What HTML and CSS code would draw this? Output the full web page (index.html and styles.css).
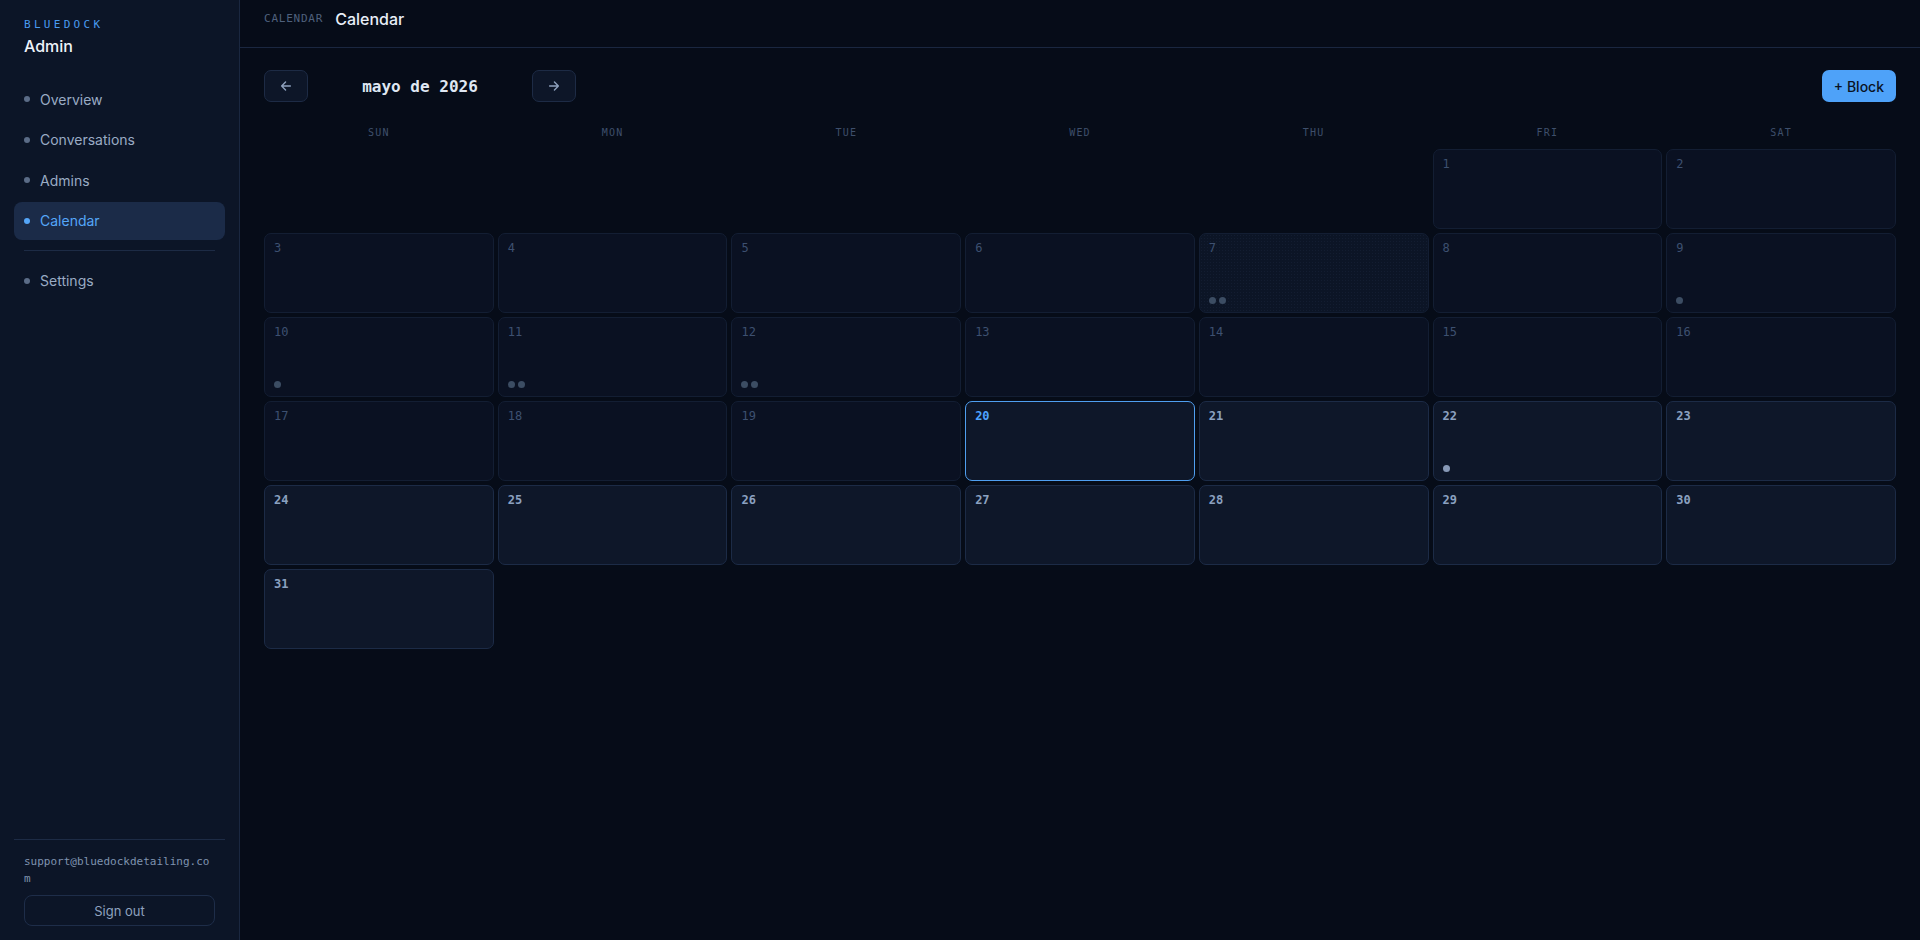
FILE: index.html
```html
<!DOCTYPE html>
<html lang="es">
<head>
<meta charset="utf-8">
<title>Bluedock Admin · Calendar</title>
<link rel="stylesheet" href="styles.css">
</head>
<body>
<div class="app">
  <aside class="sidebar">
    <div class="brand">
      <div class="brand-mark">BLUEDOCK</div>
      <div class="brand-title">Admin</div>
    </div>
    <nav class="nav">
      <a class="nav-item"><span class="nav-dot"></span>Overview</a>
      <a class="nav-item"><span class="nav-dot"></span>Conversations</a>
      <a class="nav-item"><span class="nav-dot"></span>Admins</a>
      <a class="nav-item is-active"><span class="nav-dot"></span>Calendar</a>
      <div class="nav-divider"></div>
      <a class="nav-item"><span class="nav-dot"></span>Settings</a>
    </nav>
    <div class="sidebar-footer">
      <div class="account-email">support@bluedockdetailing.com</div>
      <button class="signout">Sign out</button>
    </div>
  </aside>

  <main class="main">
    <header class="topbar">
      <span class="crumb">CALENDAR</span>
      <h1 class="page-title">Calendar</h1>
    </header>

    <section class="content">
      <div class="toolbar">
        <button class="nav-btn" aria-label="Previous month">
          <svg width="14" height="14" viewBox="0 0 16 16" fill="none" stroke="currentColor" stroke-width="1.6" stroke-linecap="round" stroke-linejoin="round"><path d="M13 8H3M7.5 3.5 3 8l4.5 4.5"/></svg>
        </button>
        <div class="month-label">mayo de 2026</div>
        <button class="nav-btn" aria-label="Next month">
          <svg width="14" height="14" viewBox="0 0 16 16" fill="none" stroke="currentColor" stroke-width="1.6" stroke-linecap="round" stroke-linejoin="round"><path d="M3 8h10M8.5 3.5 13 8l-4.5 4.5"/></svg>
        </button>
        <button class="block-btn">+ Block</button>
      </div>

      <div class="weekdays">
        <div>SUN</div><div>MON</div><div>TUE</div><div>WED</div><div>THU</div><div>FRI</div><div>SAT</div>
      </div>

      <div class="month-grid">
        <div class="day-empty"></div>
        <div class="day-empty"></div>
        <div class="day-empty"></div>
        <div class="day-empty"></div>
        <div class="day-empty"></div>
        <div class="day past"><span class="num">1</span></div>
        <div class="day past"><span class="num">2</span></div>

        <div class="day past"><span class="num">3</span></div>
        <div class="day past"><span class="num">4</span></div>
        <div class="day past"><span class="num">5</span></div>
        <div class="day past"><span class="num">6</span></div>
        <div class="day past blocked"><span class="num">7</span><div class="dots"><i></i><i></i></div></div>
        <div class="day past"><span class="num">8</span></div>
        <div class="day past"><span class="num">9</span><div class="dots"><i></i></div></div>

        <div class="day past"><span class="num">10</span><div class="dots"><i></i></div></div>
        <div class="day past"><span class="num">11</span><div class="dots"><i></i><i></i></div></div>
        <div class="day past"><span class="num">12</span><div class="dots"><i></i><i></i></div></div>
        <div class="day past"><span class="num">13</span></div>
        <div class="day past"><span class="num">14</span></div>
        <div class="day past"><span class="num">15</span></div>
        <div class="day past"><span class="num">16</span></div>

        <div class="day past"><span class="num">17</span></div>
        <div class="day past"><span class="num">18</span></div>
        <div class="day past"><span class="num">19</span></div>
        <div class="day today"><span class="num">20</span></div>
        <div class="day"><span class="num">21</span></div>
        <div class="day"><span class="num">22</span><div class="dots"><i></i></div></div>
        <div class="day"><span class="num">23</span></div>

        <div class="day"><span class="num">24</span></div>
        <div class="day"><span class="num">25</span></div>
        <div class="day"><span class="num">26</span></div>
        <div class="day"><span class="num">27</span></div>
        <div class="day"><span class="num">28</span></div>
        <div class="day"><span class="num">29</span></div>
        <div class="day"><span class="num">30</span></div>

        <div class="day"><span class="num">31</span></div>
      </div>
    </section>
  </main>
</div>
</body>
</html>
```

FILE: styles.css
```css
* { box-sizing: border-box; }

html, body {
  margin: 0;
  height: 100%;
}

body {
  background: #060c18;
  color: #e2e9f3;
  font-family: Inter, "Noto Sans", "Liberation Sans", sans-serif;
  -webkit-font-smoothing: antialiased;
}

.app {
  display: flex;
  height: 940px;
}

/* ---------- sidebar ---------- */
.sidebar {
  width: 240px;
  flex: 0 0 240px;
  background: #0c1527;
  border-right: 1px solid #1a2740;
  display: flex;
  flex-direction: column;
  padding: 18px 14px 14px;
}

.brand {
  padding: 0 10px;
}

.brand-mark {
  font-family: "DejaVu Sans Mono", "Liberation Mono", monospace;
  font-size: 11px;
  line-height: 14px;
  letter-spacing: 0.3em;
  color: #4a9bf0;
}

.brand-title {
  margin-top: 4px;
  font-size: 16px;
  line-height: 20px;
  font-weight: 500;
  color: #eef3fa;
}

.nav {
  margin-top: 24px;
  display: flex;
  flex-direction: column;
  gap: 2.5px;
}

.nav-item {
  display: flex;
  align-items: center;
  gap: 10px;
  height: 38px;
  padding: 0 10px;
  border-radius: 8px;
  font-size: 14px;
  color: #9aabc4;
  cursor: pointer;
}

.nav-dot {
  width: 6px;
  height: 6px;
  border-radius: 50%;
  background: #5b6c87;
}

.nav-item.is-active {
  background: #1b2b48;
  color: #55a6f8;
}

.nav-item.is-active .nav-dot {
  background: #55a6f8;
}

.nav-divider {
  height: 1px;
  background: #1d2b45;
  margin: 8px 10px;
}

.sidebar-footer {
  margin-top: auto;
  border-top: 1px solid #1d2b45;
  padding: 13px 10px 0;
}

.account-email {
  font-family: "DejaVu Sans Mono", "Liberation Mono", monospace;
  font-size: 11px;
  line-height: 17px;
  color: #7f93b0;
  word-break: break-all;
}

.signout {
  margin-top: 8px;
  width: 100%;
  height: 31px;
  background: transparent;
  border: 1px solid #1e2d49;
  border-radius: 8px;
  color: #8fa2bf;
  font-family: Inter, "Noto Sans", "Liberation Sans", sans-serif;
  font-size: 13px;
}

/* ---------- main ---------- */
.main {
  flex: 1;
  display: flex;
  flex-direction: column;
  min-width: 0;
}

.topbar {
  height: 48px;
  border-bottom: 1px solid #1a2740;
  display: flex;
  align-items: flex-start;
  gap: 12px;
  padding: 9px 24px 0;
}

.crumb {
  font-family: "DejaVu Sans Mono", "Liberation Mono", monospace;
  font-size: 11px;
  line-height: 20px;
  letter-spacing: 0.07em;
  color: #4f607c;
}

.page-title {
  margin: 0;
  font-size: 16px;
  line-height: 20px;
  font-weight: 500;
  color: #e8eef7;
}

.content {
  padding: 22px 24px;
}

.toolbar {
  display: flex;
  align-items: center;
  gap: 12px;
}

.nav-btn {
  width: 44px;
  height: 32px;
  border-radius: 7px;
  background: #0d1628;
  border: 1px solid #1d2b45;
  color: #8ea1bd;
  display: flex;
  align-items: center;
  justify-content: center;
  padding: 0;
}

.month-label {
  min-width: 200px;
  text-align: center;
  font-family: "DejaVu Sans Mono", "Liberation Mono", monospace;
  font-size: 16px;
  font-weight: 700;
  color: #dfe7f2;
}

.block-btn {
  margin-left: auto;
  height: 32px;
  padding: 0 12px;
  border: 0;
  border-radius: 7px;
  background: #4ea2f9;
  color: #0a1324;
  font-family: Inter, "Noto Sans", "Liberation Sans", sans-serif;
  font-size: 14px;
  font-weight: 500;
}

.weekdays {
  margin-top: 20px;
  display: grid;
  grid-template-columns: repeat(7, 1fr);
  gap: 4px;
  height: 20px;
  align-items: center;
}

.weekdays div {
  text-align: center;
  font-family: "DejaVu Sans Mono", "Liberation Mono", monospace;
  font-size: 10px;
  letter-spacing: 0.12em;
  color: #3e4f6b;
}

.month-grid {
  margin-top: 7px;
  display: grid;
  grid-template-columns: repeat(7, 1fr);
  grid-auto-rows: 80px;
  gap: 4px;
}

.day {
  display: flex;
  flex-direction: column;
  padding: 6px 9px 8px;
  border-radius: 7px;
  background: #0e1729;
  border: 1px solid #1c2b46;
}

.num {
  font-family: "DejaVu Sans Mono", "Liberation Mono", monospace;
  font-size: 12px;
  line-height: 16px;
  font-weight: 700;
  color: #8ba1c0;
}

.day.past {
  background: #0a1122;
  border-color: #131e33;
}

.day.past .num {
  font-weight: 400;
  color: #3d5070;
}

/* blocked day: faint dotted texture */
.day.blocked {
  background-color: #0c1526;
  background-image: radial-gradient(circle, rgba(70, 95, 130, 0.12) 0.6px, transparent 0.8px);
  background-size: 3px 3px;
}

.day.today {
  border-color: #4f9ff0;
}

.day.today .num {
  color: #4da3ff;
}

.dots {
  margin-top: auto;
  display: flex;
  gap: 3px;
}

.dots i {
  width: 7px;
  height: 7px;
  border-radius: 50%;
  background: #8799b6;
}

.day.past .dots i {
  background: #3c4d63;
}
```
